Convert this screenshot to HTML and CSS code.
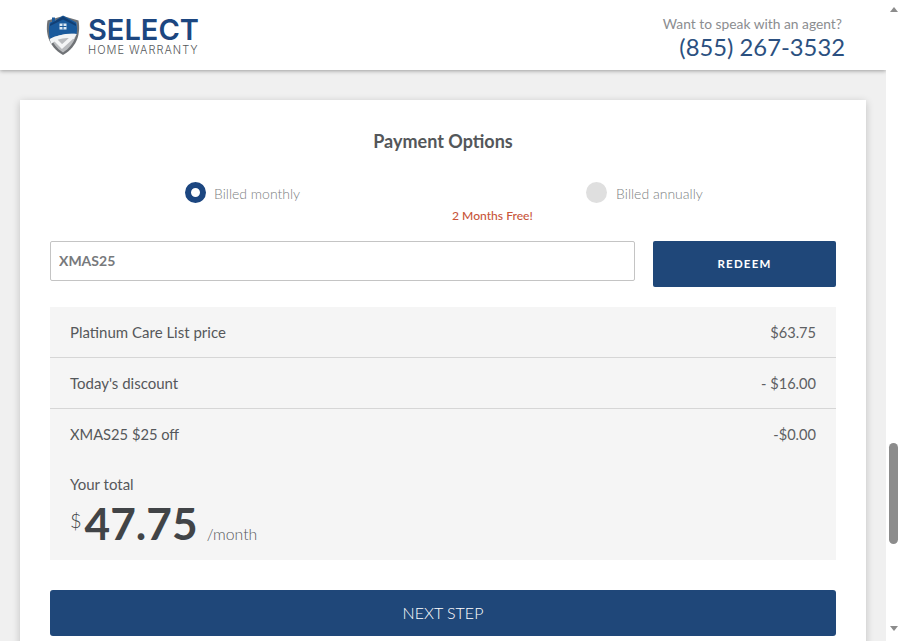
FILE: index.html
```html
<!DOCTYPE html>
<html lang="en">
<head>
<meta charset="utf-8">
<title>Payment Options</title>
<link rel="stylesheet" href="styles.css">
</head>
<body>
<div class="page">
  <header class="header">
    <div class="logo">
      <svg class="shield" width="36" height="42" viewBox="0 0 36 42" aria-hidden="true">
        <path d="M18 2 L33.500 6.500 C35.500 18 33.500 32 18 41 C2.500 32 .5 18 2.500 6.500 Z" fill="#6f7276"/>
        <path d="M18 4.500 L31.500 8.500 C32.800 18 31 30 18 38.500 C5 30 3.200 18 4.500 8.500 Z" fill="#b9bbbe"/>
        <path d="M4.500 8.500 L7 7.700 L7 3.500 L10 3.500 L10 6.800 L18 1.500 L31.500 8.500 C32.200 13 32.200 17 31.700 20 C22 19 12 21 4.700 25 C3.700 19 3.700 13 4.500 8.500 Z" fill="#1a5a9c"/>
        <path d="M5 10 L18 2.500 L31 10 L31 12 L18 5.500 L5 12 Z" fill="#123f74"/>
        <path d="M4.700 25 C12 21 22 19 31.700 20 C30.500 22 29.500 23.500 29 25 C20 22.500 12 25 6 30 Z" fill="#f2f4f6"/>
        <rect x="14.500" y="9.500" width="7" height="6" fill="#dfeaf4"/>
        <path d="M18 9.500 V15.500 M14.500 12.500 H21.500" stroke="#1a5a9c" stroke-width="1"/>
        <path d="M10.500 26 L17 32.500 L27 23.500" fill="none" stroke="#f4f5f6" stroke-width="3.500"/>
      </svg>
      <div class="wordmark">
        <span class="select">SELECT</span>
        <span class="warranty">HOME WARRANTY</span>
      </div>
    </div>
    <div class="agent">
      <span class="agent-q">Want to speak with an agent?</span>
      <span class="agent-phone">(855) 267-3532</span>
    </div>
  </header>

  <main class="card">
    <h1 class="title">Payment Options</h1>
    <div class="billing">
      <div class="option">
        <span class="radio radio-on"></span>
        <span class="option-label">Billed monthly</span>
      </div>
      <div class="option option-annual">
        <span class="radio"></span>
        <span class="option-label">Billed annually</span>
      </div>
    </div>
    <div class="free">2 Months Free!</div>
    <div class="promo">
      <input class="promo-input" type="text" value="XMAS25" aria-label="Promo code">
      <button class="redeem" type="button">REDEEM</button>
    </div>
    <section class="summary">
      <div class="row"><span>Platinum Care List price</span><span class="value">$63.75</span></div>
      <div class="row"><span>Today's discount</span><span class="value">- $16.00</span></div>
      <div class="row row-last"><span class="promo-name">XMAS25 $25 off</span><span class="value">-$0.00</span></div>
      <div class="total">
        <div class="total-label">Your total</div>
        <div class="total-price">
          <span class="currency">$</span><span class="amount">47.75</span><span class="period">/month</span>
        </div>
      </div>
    </section>
    <button class="next" type="button">NEXT STEP</button>
  </main>
</div>
<aside class="scrollbar" aria-hidden="true">
  <span class="arrow arrow-up"></span>
  <span class="thumb"></span>
  <span class="arrow arrow-down"></span>
</aside>
</body>
</html>
```
FILE: styles.css
```css
* { box-sizing: border-box; }
html, body { margin: 0; height: 100%; overflow: hidden; }
body {
  display: flex;
  font-family: Lato, "Liberation Sans", sans-serif;
  color: #55585b;
  background: #fff;
}
.page {
  width: 886px;
  height: 641px;
  flex: none;
  background: #f0f0f0;
  overflow: hidden;
}
.header {
  height: 70px;
  background: #fff;
  box-shadow: 0 1px 4px rgba(0, 0, 0, .35);
  display: flex;
  justify-content: space-between;
  align-items: flex-start;
  padding: 14px 41px 0 45px;
  position: relative;
}
.logo { display: flex; gap: 7px; }
.wordmark { display: flex; flex-direction: column; }
.select {
  font-family: Inter, "Liberation Sans", sans-serif;
  font-size: 29px;
  line-height: 31px;
  font-weight: 600;
  color: #1c4680;
}
.warranty {
  font-family: Inter, "Liberation Sans", sans-serif;
  font-size: 11px;
  line-height: 11px;
  font-weight: 300;
  letter-spacing: 1px;
  color: #55585b;
}
.agent { display: flex; flex-direction: column; align-items: flex-end; }
.agent-q { font-size: 13.800px; line-height: 20px; color: #8b8d90; margin-right: 3px; }
.agent-phone { font-size: 23.800px; line-height: 27px; color: #2b5080; }

.card {
  width: 846px;
  height: 560px;
  margin: 30px 0 0 20px;
  background: #fff;
  box-shadow: 0 2px 8px rgba(0, 0, 0, .2);
  padding: 29px 30px 30px;
}
.title {
  margin: 0;
  text-align: center;
  font-size: 18px;
  line-height: 24px;
  font-weight: 700;
  color: #54575a;
}
.billing { display: flex; margin-top: 29px; padding-left: 135px; }
.option { display: flex; align-items: center; gap: 8px; height: 22px; }
.option-annual { margin-left: 286px; gap: 9px; }
.option-label { font-size: 14px; font-weight: 300; color: #7c7f82; }
.radio { width: 21px; height: 21px; border-radius: 50%; background: #dfdfdf; margin-top: -2px; }
.radio-on {
  background: #fff;
  border: 6.500px solid #1c4680;
}
.free {
  margin: 2px 0 0 402px;
  font-size: 12.100px;
  line-height: 20px;
  font-weight: 500;
  color: #c8553a;
}
.promo { display: flex; align-items: flex-start; gap: 18px; margin-top: 15px; }
.promo-input {
  width: 585px;
  height: 40px;
  border: 1px solid #c4c4c4;
  border-radius: 2px;
  padding: 0 8px 2px;
  font: 700 14px Lato, sans-serif;
  color: #77797c;
  outline: none;
}
.redeem {
  width: 183px;
  height: 46px;
  border: 0;
  border-radius: 2px;
  padding: 0 0 2px;
  background: #1f4779;
  color: #fff;
  font: 700 11.500px Lato, sans-serif;
  letter-spacing: 1.200px;
}
.summary { margin-top: 20px; height: 253px; background: #f5f5f5; padding: 0 20px; }
.row {
  height: 51px;
  margin: 0 -20px;
  padding: 0 20px;
  display: flex;
  justify-content: space-between;
  align-items: center;
  font-size: 15px;
  color: #55585b;
  border-bottom: 1px solid #d6d6d6;
}
.row-last { border-bottom: 0; padding-bottom: 2px; }
.value { font-size: 14.600px; color: #5d6063; }
.row-last .value { margin-top: 2px; }
.promo-name { font-size: 14.700px; }
.total { padding-top: 14px; }
.total-label { font-size: 15px; line-height: 20px; }
.total-price { display: flex; align-items: baseline; }
.currency { font-size: 20px; font-weight: 300; position: relative; top: -12px; margin-right: 3px; color: #414447; }
.amount { font-size: 44.200px; line-height: 58px; font-weight: 700; color: #414447; }
.period { font-size: 15.800px; font-weight: 300; margin-left: 9px; color: #55585b; }
.next {
  display: block;
  width: 100%;
  height: 46px;
  margin-top: 30px;
  border: 0;
  border-radius: 3px;
  padding: 0 0 2px;
  background: #1f4779;
  color: #fff;
  font: 300 16px Lato, sans-serif;
}

.scrollbar {
  width: 15px;
  height: 641px;
  flex: none;
  background: #fff;
  display: flex;
  flex-direction: column;
  align-items: center;
  padding-top: 7px;
}
.arrow { width: 0; height: 0; border-left: 4.500px solid transparent; border-right: 4.500px solid transparent; }
.arrow-up { border-bottom: 5px solid #8c8c8c; }
.arrow-down { border-top: 5px solid #8c8c8c; margin-top: 82px; }
.thumb { width: 9px; height: 101px; margin-top: 431px; border-radius: 5px; background: #8c8c8c; }
```
